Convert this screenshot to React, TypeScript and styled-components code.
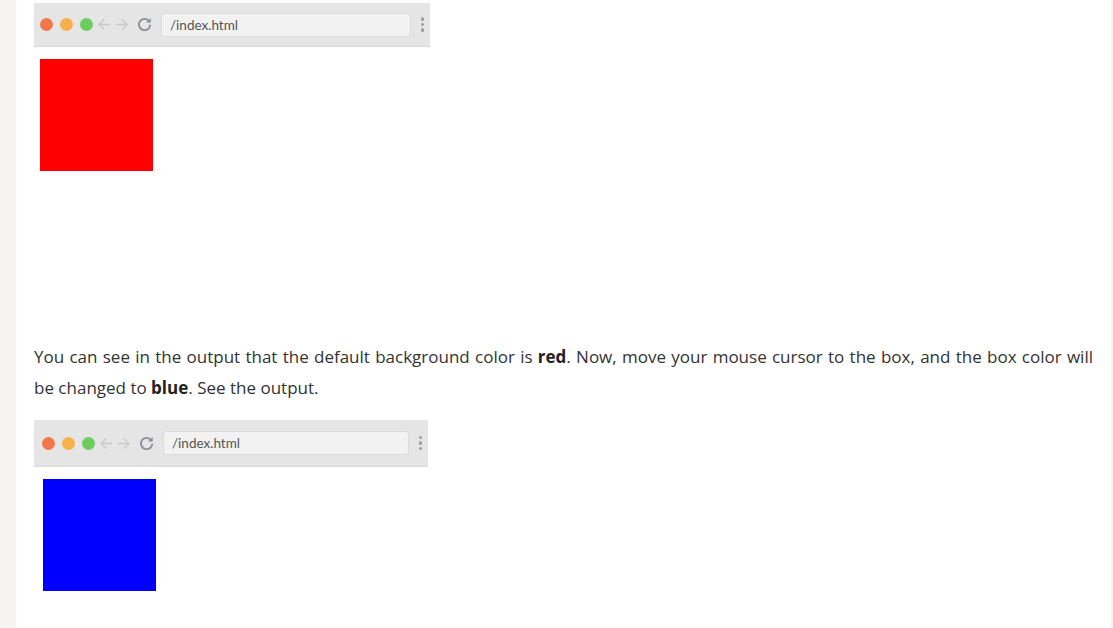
import React from "react";
import { createGlobalStyle, styled } from "styled-components";

const GlobalStyle = createGlobalStyle`
  html, body {
    margin: 0;
    padding: 0;
    background: #f7f3f3;
  }
  body {
    font-family: "Open Sans", "Noto Sans", Arial, sans-serif;
  }
`;

const Page = styled.div`
  display: flex;
  height: 628px;
  overflow: hidden;
  padding-left: 16px;
  padding-right: 2px;
`;

const Main = styled.main`
  flex: 1;
  background: #ffffff;
  padding: 3px 18px 0 18px;
`;

const Figure = styled.div`
  display: flex;
  flex-direction: column;
`;

const Bar = styled.div<{ $width: number; $height: number; $dotStart: number }>`
  display: flex;
  align-items: center;
  width: ${({ $width }) => $width}px;
  height: ${({ $height }) => $height}px;
  box-sizing: border-box;
  background: #e5e5e5;
  border-bottom: 1px solid #d9d9d9;
  padding-left: ${({ $dotStart }) => $dotStart}px;
  padding-right: 4px;
`;

const Dots = styled.div`
  display: flex;
  gap: 7px;
`;

const Dot = styled.span<{ $color: string }>`
  width: 13px;
  height: 13px;
  border-radius: 50%;
  background: ${({ $color }) => $color};
`;

const Nav = styled.div`
  display: flex;
  align-items: center;
  margin-left: 4px;
  gap: 2px;
`;

const Address = styled.div<{ $height: number }>`
  flex: 1;
  height: ${({ $height }) => $height}px;
  box-sizing: border-box;
  margin-left: 8px;
  margin-right: 10px;
  background: #f2f2f2;
  border: 1px solid #dcdcdc;
  border-radius: 3px;
  display: flex;
  align-items: center;
  padding-left: 8px;
  font-family: "Lato", "Open Sans", sans-serif;
  font-size: 13.5px;
  color: #555;
`;

const Kebab = styled.div`
  display: flex;
  flex-direction: column;
  gap: 2px;
  margin-right: 2px;

  span {
    width: 3.5px;
    height: 3.5px;
    border-radius: 50%;
    background: #9a9ea3;
  }
`;

const Canvas = styled.div<{ $height: number; $left: number }>`
  height: ${({ $height }) => $height}px;
  padding-top: 12px;
  padding-left: ${({ $left }) => $left}px;
  box-sizing: border-box;
`;

const ColorBox = styled.div<{ $color: string }>`
  width: 113px;
  height: 112px;
  background: ${({ $color }) => $color};
`;

const Text = styled.p`
  margin: 0;
  font-family: "Open Sans", "Noto Sans", sans-serif;
  font-size: 17px;
  line-height: 31px;
  color: #333333;
  text-align: justify;

  b {
    font-weight: 700;
    color: #222;
  }
`;

const Spacer = styled.div`
  height: 17px;
`;

const Arrow = ({ dir }: { dir: "left" | "right" }) => (
  <svg width="15" height="15" viewBox="0 0 15 15" fill="none">
    {dir === "left" ? (
      <path d="M13 7.5H2M7 2.5l-5 5 5 5" stroke="#c9c9c9" strokeWidth="1.3" />
    ) : (
      <path d="M2 7.5h11M8 2.5l5 5-5 5" stroke="#c9c9c9" strokeWidth="1.3" />
    )}
  </svg>
);

const Reload = () => (
  <svg width="17" height="17" viewBox="0 0 16 16" fill="none" style={{ marginLeft: 5 }}>
    <path
      d="M12.6 5.2A5.3 5.3 0 1 0 13.3 9"
      stroke="#8c9196"
      strokeWidth="1.8"
      strokeLinecap="round"
    />
    <path d="M13.8 1.8v4.4H9.4z" fill="#8c9196" />
  </svg>
);

interface BrowserProps {
  width: number;
  height: number;
  dotStart: number;
  addressHeight: number;
  boxLeft: number;
  canvasHeight: number;
  color: string;
}

const BrowserShot: React.FC<BrowserProps> = ({
  width,
  height,
  dotStart,
  addressHeight,
  boxLeft,
  canvasHeight,
  color,
}) => (
  <Figure>
    <Bar $width={width} $height={height} $dotStart={dotStart}>
      <Dots>
        <Dot $color="#f4774c" />
        <Dot $color="#f7b14c" />
        <Dot $color="#6bcd5e" />
      </Dots>
      <Nav>
        <Arrow dir="left" />
        <Arrow dir="right" />
        <Reload />
      </Nav>
      <Address $height={addressHeight}>/index.html</Address>
      <Kebab>
        <span />
        <span />
        <span />
      </Kebab>
    </Bar>
    <Canvas $height={canvasHeight} $left={boxLeft}>
      <ColorBox $color={color} />
    </Canvas>
  </Figure>
);

export default function App() {
  return (
    <>
      <GlobalStyle />
      <Page>
        <Main>
          <BrowserShot
            width={396}
            height={44}
            dotStart={6}
            addressHeight={24}
            boxLeft={6}
            canvasHeight={294}
            color="#ff0000"
          />
          <Text>
            You can see in the output that the default background color is <b>red</b>. Now,
            move your mouse cursor to the box, and the box color will be changed to{" "}
            <b>blue</b>. See the output.
          </Text>
          <Spacer />
          <BrowserShot
            width={394}
            height={47}
            dotStart={8}
            addressHeight={24}
            boxLeft={9}
            canvasHeight={160}
            color="#0000ff"
          />
        </Main>
      </Page>
    </>
  );
}
